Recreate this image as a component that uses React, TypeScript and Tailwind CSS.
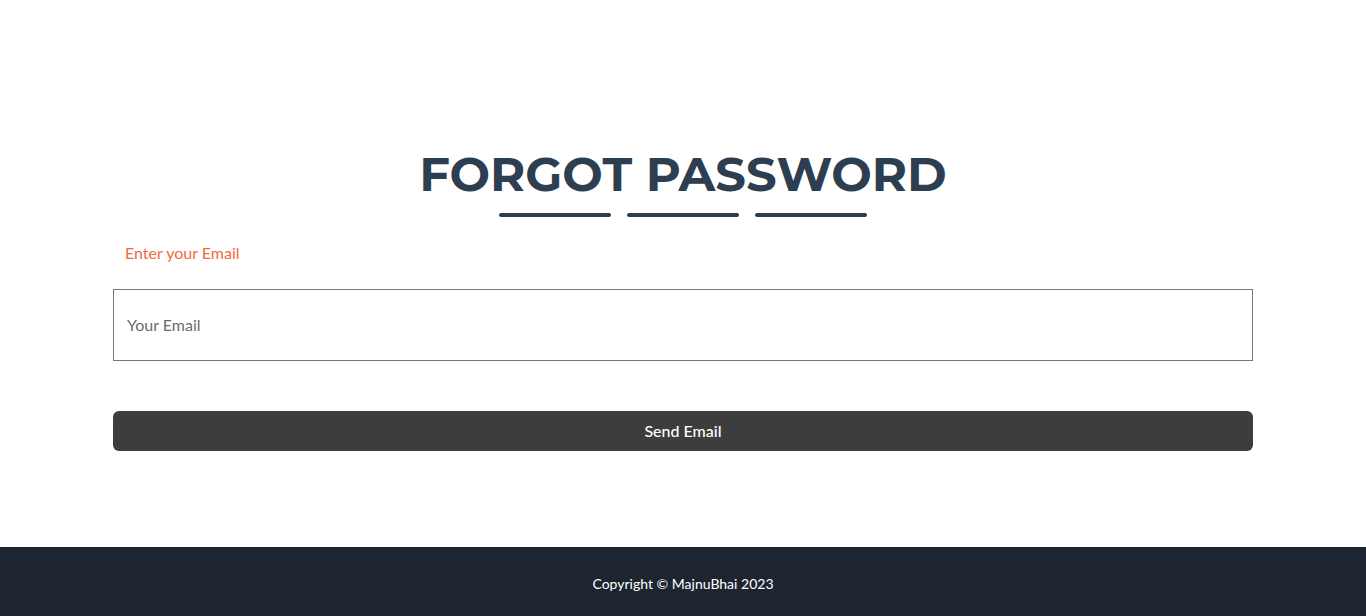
import React from "react";

function ForgotPassword() {
  return (
    <div className="min-h-screen flex flex-col bg-white font-['Lato','Liberation_Sans',sans-serif]">
      <main className="flex-1 flex flex-col items-center pt-[142px]">
        <h1 className="font-['Montserrat','Inter',sans-serif] font-bold text-[48px] leading-[64px] text-[#2c3e50]">
          FORGOT PASSWORD
        </h1>
        <div className="flex gap-4 mt-[7px]">
          <span className="block w-[112px] h-[4px] rounded-full bg-[#2c3e50]" />
          <span className="block w-[112px] h-[4px] rounded-full bg-[#2c3e50]" />
          <span className="block w-[112px] h-[4px] rounded-full bg-[#2c3e50]" />
        </div>
        <form className="w-[1140px] mt-[24px]" onSubmit={(e) => e.preventDefault()}>
          <label className="block px-3 text-[16px] leading-[24px] text-[#f26b3a]">
            Enter your Email
          </label>
          <input
            type="email"
            placeholder="Your Email"
            className="mt-[24px] w-full h-[72px] border border-[#767676] px-[13px] pb-[1px] text-[16px] text-[#333] placeholder:text-[#6c6c6c] outline-none"
          />
          <button
            type="submit"
            className="mt-[50px] w-full h-[40px] rounded-[6px] bg-[#3d3d3d] text-white text-[16px] font-medium"
          >
            Send Email
          </button>
        </form>
      </main>
      <footer className="h-[69px] bg-[#1d2530] flex items-center justify-center pt-[3px]">
        <p className="text-white text-[14px]">Copyright © MajnuBhai 2023</p>
      </footer>
    </div>
  );
}

export default function App() {
  return <ForgotPassword />;
}
